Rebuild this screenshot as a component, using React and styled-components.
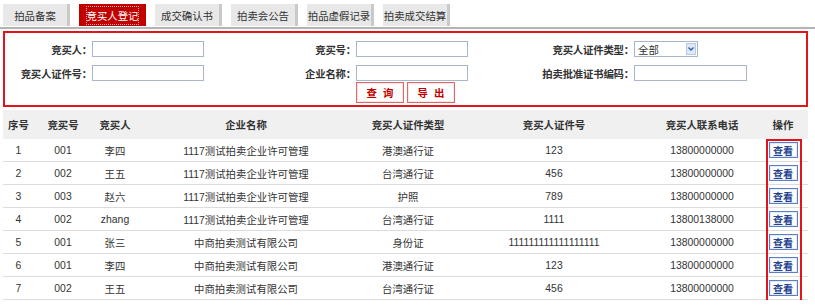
import React from 'react';
import styled, { createGlobalStyle } from 'styled-components';

const GlobalStyle = createGlobalStyle`
  body {
    margin: 0;
    background: #fff;
    font-family: "Liberation Sans", "Noto Sans CJK SC", sans-serif;
    font-size: 10.4px;
    color: #333;
  }
`;

const Page = styled.div`
  width: 815px;
`;

const TabBar = styled.div`
  display: flex;
  gap: 9px;
  padding: 4px 0 1px 3px;
  border-bottom: 2px solid #b4b4b4;
`;

const Tab = styled.div`
  width: 67px;
  height: 22px;
  box-sizing: border-box;
  display: flex;
  align-items: center;
  justify-content: center;
  white-space: nowrap;
  background: ${(p) => (p.$active ? '#c10000' : '#e8e8e8')};
  color: ${(p) => (p.$active ? '#fff' : '#333')};
  border-right: ${(p) => (p.$active ? 'none' : '3px solid #c9c9c9')};
  span {
    padding: 1px 0;
    outline: ${(p) => (p.$active ? '1px dotted #e8b0b0' : 'none')};
  }
`;

const SearchBox = styled.div`
  margin: 2px 7px 0 3px;
  border: 2px solid #e3131b;
  padding: 8px 0 2px;
`;

const FieldGrid = styled.div`
  display: grid;
  grid-template-columns: 87px 112px 152px 112px 166px 113px;
  row-gap: 8px;
  align-items: center;
`;

const Label = styled.label`
  text-align: right;
  font-weight: bold;
  white-space: nowrap;
  letter-spacing: -0.2px;
`;

const Input = styled.div`
  height: 16px;
  box-sizing: border-box;
  border: 1px solid #a7b6ca;
  background: #fff;
`;

const Select = styled.div`
  width: 64px;
  height: 16px;
  box-sizing: border-box;
  border: 1px solid #a7b6ca;
  display: flex;
  align-items: center;
  justify-content: space-between;
  padding: 0 1px 0 3px;
`;

const SelectArrow = styled.div`
  width: 10px;
  height: 12px;
  background: #dfe8f8;
  border: 1px solid #b8c9e6;
  box-sizing: border-box;
  display: flex;
  align-items: center;
  justify-content: center;
`;

const ButtonRow = styled.div`
  display: flex;
  justify-content: center;
  gap: 3px;
  margin-top: 1px;
`;

const ActionButton = styled.div`
  width: 48px;
  height: 21px;
  box-sizing: border-box;
  border: 1px solid #e16767;
  box-shadow: inset 0 0 0 1px #fbe4e4;
  display: flex;
  align-items: center;
  justify-content: center;
  color: #c00000;
  font-weight: bold;
  letter-spacing: 6px;
  padding-left: 6px;
`;

const TableWrap = styled.div`
  position: relative;
  margin: 3px 7px 0 3px;
`;

const Table = styled.table`
  width: 805px;
  border-collapse: collapse;
  table-layout: fixed;
`;

const Th = styled.th`
  height: 29px;
  background: #f0f0f0;
  font-weight: bold;
  text-align: center;
  padding: 0;
`;

const Td = styled.td`
  height: 22px;
  border-bottom: 1px solid #dcdcdc;
  text-align: center;
  padding: 0;
  white-space: nowrap;
`;

const ViewButton = styled.div`
  margin: 0 auto;
  width: 29px;
  height: 16px;
  box-sizing: border-box;
  border: 1px solid #5b7fc6;
  box-shadow: inset 0 0 0 1px #e3ebf8;
  color: #23438e;
  font-weight: bold;
  font-size: 10px;
  display: flex;
  align-items: center;
  justify-content: center;
`;

const Highlight = styled.div`
  position: absolute;
  left: 763px;
  top: 29px;
  width: 36px;
  height: 163px;
  box-sizing: border-box;
  border: 2px solid #e3131b;
  pointer-events: none;
`;

const tabs = ['拍品备案', '竞买人登记', '成交确认书', '拍卖会公告', '拍品虚假记录', '拍卖成交结算'];

const widths = [31, 58, 46, 216, 108, 184, 112, 50];
const headers = ['序号', '竞买号', '竞买人', '企业名称', '竞买人证件类型', '竞买人证件号', '竞买人联系电话', '操作'];

const rows = [
  ['1', '001', '李四', '1117测试拍卖企业许可管理', '港澳通行证', '123', '13800000000'],
  ['2', '002', '王五', '1117测试拍卖企业许可管理', '台湾通行证', '456', '13800000000'],
  ['3', '003', '赵六', '1117测试拍卖企业许可管理', '护照', '789', '13800000000'],
  ['4', '002', 'zhang', '1117测试拍卖企业许可管理', '台湾通行证', '1111', '13800138000'],
  ['5', '001', '张三', '中商拍卖测试有限公司', '身份证', '111111111111111111', '13800000000'],
  ['6', '001', '李四', '中商拍卖测试有限公司', '港澳通行证', '123', '13800000000'],
  ['7', '002', '王五', '中商拍卖测试有限公司', '台湾通行证', '456', '13800000000'],
];

export default function App() {
  return (
    <Page>
      <GlobalStyle />
      <TabBar>
        {tabs.map((t, i) => (
          <Tab key={t} $active={i === 1}>
            <span>{t}</span>
          </Tab>
        ))}
      </TabBar>

      <SearchBox>
        <FieldGrid>
          <Label>竞买人：</Label>
          <Input />
          <Label>竞买号：</Label>
          <Input />
          <Label>竞买人证件类型：</Label>
          <Select>
            <span>全部</span>
            <SelectArrow>
              <svg width="6" height="4" viewBox="0 0 6 4">
                <path d="M0.5 0.5 L3 3 L5.5 0.5" fill="none" stroke="#2a5bb8" strokeWidth="1.3" />
              </svg>
            </SelectArrow>
          </Select>
          <Label>竞买人证件号：</Label>
          <Input />
          <Label>企业名称：</Label>
          <Input />
          <Label>拍卖批准证书编码：</Label>
          <Input />
        </FieldGrid>
        <ButtonRow>
          <ActionButton>查询</ActionButton>
          <ActionButton>导出</ActionButton>
        </ButtonRow>
      </SearchBox>

      <TableWrap>
        <Table>
          <colgroup>
            {widths.map((w, i) => (
              <col key={i} style={{ width: w }} />
            ))}
          </colgroup>
          <thead>
            <tr>
              {headers.map((h) => (
                <Th key={h}>{h}</Th>
              ))}
            </tr>
          </thead>
          <tbody>
            {rows.map((r) => (
              <tr key={r[0]}>
                {r.map((c, i) => (
                  <Td key={i}>{c}</Td>
                ))}
                <Td>
                  <ViewButton>查看</ViewButton>
                </Td>
              </tr>
            ))}
          </tbody>
        </Table>
        <Highlight />
      </TableWrap>
    </Page>
  );
}
